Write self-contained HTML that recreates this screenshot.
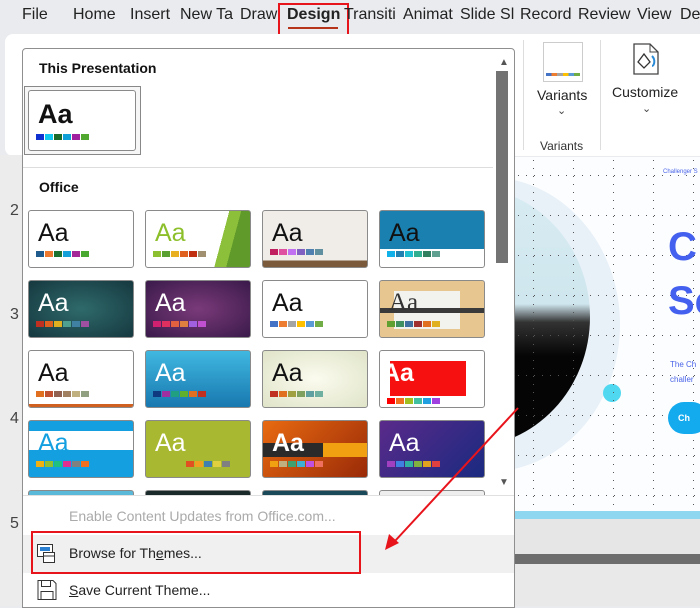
<!DOCTYPE html>
<html><head><style>
*{margin:0;padding:0;box-sizing:border-box}
body{width:700px;height:606px;overflow:hidden;background:#e9ebee;font-family:"Liberation Sans",sans-serif;position:relative}
.a{position:absolute}
.tab{position:absolute;top:6px;font-size:16px;color:#222}
.th{position:absolute;width:106px;height:58px;border:1px solid #8a8a8a;border-radius:3px;overflow:hidden;background:#fff}
.th .t{position:absolute;left:9px;top:8px;font-size:25px;color:#111}
.sq{position:absolute;bottom:10px;left:7px;display:flex;gap:1px}
.sq i{display:block;width:8px;height:6px}
</style></head><body>
<div class="tab" style="left:22px">File</div>
<div class="tab" style="left:73px">Home</div>
<div class="tab" style="left:130px">Insert</div>
<div class="tab" style="left:180px">New Ta</div>
<div class="tab" style="left:240px">Draw</div>
<div class="tab" style="left:287px;font-weight:bold">Design</div>
<div class="a" style="left:288px;top:27px;width:50px;height:2px;background:#b5341a"></div>
<div class="a" style="left:278px;top:3px;width:71px;height:39px;border:2px solid #e8141c"></div>
<div class="tab" style="left:344px">Transiti</div>
<div class="tab" style="left:403px">Animat</div>
<div class="tab" style="left:460px">Slide Sl</div>
<div class="tab" style="left:520px">Record</div>
<div class="tab" style="left:578px">Review</div>
<div class="tab" style="left:637px">View</div>
<div class="tab" style="left:680px">De</div>
<div class="a" style="left:5px;top:34px;width:695px;height:122px;background:#fff;border-radius:8px 0 0 8px"></div>
<div class="a" style="left:523px;top:40px;width:1px;height:110px;background:#ddd"></div>
<div class="a" style="left:600px;top:40px;width:1px;height:110px;background:#ddd"></div>
<div class="a" style="left:543px;top:42px;width:40px;height:40px;border:1px solid #ccc;background:#fff"></div>
<div class="a" style="left:546px;top:73px;width:34px;height:3px;background:linear-gradient(90deg,#4472c4 16%,#ed7d31 16% 33%,#a5a5a5 33% 50%,#ffc000 50% 66%,#5b9bd5 66% 83%,#70ad47 83%)"></div>
<div class="a" style="left:537px;top:87px;font-size:14px;color:#222">Variants</div>
<div class="a" style="left:557px;top:104px;font-size:11px;color:#444">⌄</div>
<div class="a" style="left:540px;top:139px;font-size:12px;color:#333">Variants</div>
<svg class="a" style="left:628px;top:42px" width="34" height="34"><path d="M6 2h16l8 8v22H6z" fill="#fff" stroke="#444" stroke-width="1.3"/><path d="M22 2v8h8" fill="none" stroke="#444"/><path d="M10 20l6-8 6 8-6 6z" fill="#fff" stroke="#333" stroke-width="1.3"/><path d="M24 14c4 4 2 10 0 10" stroke="#2a8ad6" stroke-width="2" fill="none"/></svg>
<div class="a" style="left:612px;top:84px;font-size:14px;color:#222">Customize</div>
<div class="a" style="left:642px;top:102px;font-size:11px;color:#444">⌄</div>
<div class="a" style="left:0;top:155px;width:22px;height:451px;background:#ececec"></div>
<div class="a" style="left:10px;top:202px;font-size:16px;color:#444">2</div>
<div class="a" style="left:10px;top:306px;font-size:16px;color:#444">3</div>
<div class="a" style="left:10px;top:410px;font-size:16px;color:#444">4</div>
<div class="a" style="left:10px;top:515px;font-size:16px;color:#444">5</div>
<div class="a" style="left:515px;top:157px;width:185px;height:362px;background:#fbfdff;overflow:hidden">
 <div class="a" style="left:-160px;top:20px;width:265px;height:295px;border-radius:50%;background:#e8f0f8"></div>
 <div class="a" style="left:-170px;top:30px;width:245px;height:260px;border-radius:50%;background:linear-gradient(180deg,#d8ecf2 0,#cfe6ee 45%,#333 52%,#050505 65%)"></div>
 <div class="a" style="left:88px;top:227px;width:18px;height:18px;border-radius:50%;background:#50d8f0"></div>
 <svg class="a" style="left:0;top:0" width="185" height="355"><defs><pattern id="h" width="8" height="40" patternUnits="userSpaceOnUse" y="18"><rect x="3" y="0" width="1" height="1" fill="#555"/></pattern><pattern id="v" width="40" height="8" patternUnits="userSpaceOnUse" x="18"><rect x="0" y="3" width="1" height="1" fill="#555"/></pattern></defs><rect width="185" height="355" fill="url(#h)"/><rect width="185" height="355" fill="url(#v)"/></svg>
 <div class="a" style="left:148px;top:12px;font-size:6px;color:#4a63e8">Challenger S</div>
 <div class="a" style="left:153px;top:68px;font-size:40px;font-weight:bold;color:#4460ee">C</div>
 <div class="a" style="left:153px;top:122px;font-size:40px;font-weight:bold;color:#4460ee">Sc</div>
 <div class="a" style="left:155px;top:200px;font-size:8px;color:#4a63e8;line-height:15px">The Ch<br>challer</div>
 <div class="a" style="left:153px;top:245px;width:40px;height:32px;border-radius:16px;background:#14aaee;color:#fff;font-size:9px;font-weight:bold;padding:11px 0 0 10px">Ch</div>
 <div class="a" style="left:0;top:354px;width:185px;height:8px;background:#8fd6f0"></div>
</div>
<div class="a" style="left:515px;top:519px;width:185px;height:35px;background:#e6e6e6"></div>
<div class="a" style="left:515px;top:554px;width:185px;height:10px;background:#6d6d6d"></div>
<div class="a" style="left:515px;top:564px;width:185px;height:42px;background:#e9e9e9"></div>
<div class="a" style="left:22px;top:48px;width:493px;height:560px;background:#fff;border:1px solid #8f8f8f;border-radius:4px 4px 0 0;overflow:hidden">
 <div class="a" style="left:16px;top:11px;font-size:14px;font-weight:bold;color:#111">This Presentation</div>
 <div class="a" style="left:1px;top:37px;width:117px;height:69px;border:1px solid #888;background:#f6f6f6"></div>
 <div class="th" style="left:5px;top:41px;height:61px;width:108px"><div class="t" style="font-weight:bold;font-size:27px">Aa</div><div class="sq"><i style="background:#1030d0"></i><i style="background:#10c8f0"></i><i style="background:#1a6a2a"></i><i style="background:#10a0d8"></i><i style="background:#a020a0"></i><i style="background:#50a830"></i></div></div>
 <div class="a" style="left:0;top:118px;width:470px;height:1px;background:#ddd"></div>
 <div class="a" style="left:16px;top:130px;font-size:14px;font-weight:bold;color:#111">Office</div>
 <div class="a" style="left:476px;top:8px;font-size:10px;color:#555">▲</div>
 <div class="a" style="left:473px;top:22px;width:12px;height:192px;background:#737373"></div>
 <div class="a" style="left:476px;top:428px;font-size:10px;color:#555">▼</div>
 <div class="a" style="left:0;top:155px;width:470px;height:291px;overflow:hidden">
  <div class="th" style="left:5px;top:6px"><div class="t">Aa</div><div class="sq"><i style="background:#1f5b8c"></i><i style="background:#ee7a30"></i><i style="background:#1e7230"></i><i style="background:#14a0d8"></i><i style="background:#a52898"></i><i style="background:#48a830"></i></div></div>
  <div class="th" style="left:122px;top:6px;background:linear-gradient(105deg,#fff 70%,#8cbf3a 70% 80%,#5f9a2a 80%)"><div class="t" style="color:#8cbf2a">Aa</div><div class="sq"><i style="background:#8cc030"></i><i style="background:#5aa030"></i><i style="background:#e8b020"></i><i style="background:#e06020"></i><i style="background:#c03010"></i><i style="background:#a09070"></i></div></div>
  <div class="th" style="left:239px;top:6px;background:linear-gradient(#f0ece8 88%,#7a5a3a 88%)"><div class="t">Aa</div><div class="sq" style="bottom:12px"><i style="background:#c02060"></i><i style="background:#e050a0"></i><i style="background:#c070f0"></i><i style="background:#8060c0"></i><i style="background:#5080b0"></i><i style="background:#6090a0"></i></div></div>
  <div class="th" style="left:356px;top:6px;background:linear-gradient(#1a80b0 68%,#fff 68%)"><div class="t">Aa</div><div class="sq"><i style="background:#10b0e8"></i><i style="background:#2080b0"></i><i style="background:#20c0d0"></i><i style="background:#30b090"></i><i style="background:#308060"></i><i style="background:#60a090"></i></div></div>
  <div class="th" style="left:5px;top:76px;background:radial-gradient(#2f6a6a,#15383f)"><div class="t" style="color:#fff">Aa</div><div class="sq"><i style="background:#c03020"></i><i style="background:#e06020"></i><i style="background:#e0b020"></i><i style="background:#50a090"></i><i style="background:#4080a0"></i><i style="background:#a050a0"></i></div></div>
  <div class="th" style="left:122px;top:76px;background:radial-gradient(#7a3a7a,#3a1a4a)"><div class="t" style="color:#fff">Aa</div><div class="sq"><i style="background:#d02070"></i><i style="background:#e03060"></i><i style="background:#e06040"></i><i style="background:#e08040"></i><i style="background:#a060e0"></i><i style="background:#c050d0"></i></div></div>
  <div class="th" style="left:239px;top:76px"><div class="t">Aa</div><div class="sq"><i style="background:#4472c4"></i><i style="background:#ed7d31"></i><i style="background:#a5a5a5"></i><i style="background:#ffc000"></i><i style="background:#5b9bd5"></i><i style="background:#70ad47"></i></div></div>
  <div class="th" style="left:356px;top:76px;background:#e8c690"><div class="a" style="left:14px;top:10px;width:66px;height:38px;background:#f2f2ee"></div><div class="a" style="left:0;top:27px;width:106px;height:5px;background:#3a3a3a"></div><div class="t" style="font-family:'Liberation Serif',serif;color:#333">Aa</div><div class="sq"><i style="background:#60a030"></i><i style="background:#409060"></i><i style="background:#4070a0"></i><i style="background:#a03030"></i><i style="background:#e07020"></i><i style="background:#e0b020"></i></div></div>
  <div class="th" style="left:5px;top:146px"><div class="t">Aa</div><div class="a" style="left:0;bottom:0;width:106px;height:3px;background:#d06020"></div><div class="sq"><i style="background:#e07020"></i><i style="background:#c05030"></i><i style="background:#906050"></i><i style="background:#a08060"></i><i style="background:#c0b080"></i><i style="background:#90a080"></i></div></div>
  <div class="th" style="left:122px;top:146px;background:linear-gradient(#40b8e0,#1878b0)"><div class="t" style="color:#fff">Aa</div><div class="sq"><i style="background:#103a80"></i><i style="background:#a030a0"></i><i style="background:#20a080"></i><i style="background:#60b030"></i><i style="background:#e07020"></i><i style="background:#c03020"></i></div></div>
  <div class="th" style="left:239px;top:146px;background:radial-gradient(#fbfbef,#e0e4c8)"><div class="t">Aa</div><div class="sq"><i style="background:#c03020"></i><i style="background:#e07020"></i><i style="background:#a0a040"></i><i style="background:#80a060"></i><i style="background:#60a0a0"></i><i style="background:#70b0a0"></i></div></div>
  <div class="th" style="left:356px;top:146px"><div class="a" style="left:10px;top:10px;width:76px;height:35px;background:#f71010"></div><div class="t" style="color:#fff;font-weight:bold;left:2px">Aa</div><div class="sq" style="bottom:3px"><i style="background:#f00"></i><i style="background:#f07020"></i><i style="background:#a0c020"></i><i style="background:#40c0a0"></i><i style="background:#20a0e0"></i><i style="background:#a040e0"></i></div></div>
  <div class="th" style="left:5px;top:216px;background:linear-gradient(#14a0e0 18%,#fff 18% 52%,#14a0e0 52%)"><div class="t" style="color:#14a0e0">Aa</div><div class="sq"><i style="background:#f0b010"></i><i style="background:#90c030"></i><i style="background:#20c080"></i><i style="background:#e03090"></i><i style="background:#808080"></i><i style="background:#f07020"></i></div></div>
  <div class="th" style="left:122px;top:216px;background:#a8b830"><div class="t" style="color:#fff">Aa</div><div class="sq" style="left:40px"><i style="background:#e05020"></i><i style="background:#f0a020"></i><i style="background:#4080b0"></i><i style="background:#e0d040"></i><i style="background:#808080"></i></div></div>
  <div class="th" style="left:239px;top:216px;background:linear-gradient(135deg,#e86a10,#9a2a08)"><div class="a" style="left:0;top:22px;width:60px;height:14px;background:#2a2a2a"></div><div class="a" style="left:60px;top:22px;width:46px;height:14px;background:#f0a010"></div><div class="t" style="color:#fff;font-weight:bold">Aa</div><div class="sq"><i style="background:#f0a010"></i><i style="background:#c0b080"></i><i style="background:#40a070"></i><i style="background:#40b0d0"></i><i style="background:#c050e0"></i><i style="background:#f07060"></i></div></div>
  <div class="th" style="left:356px;top:216px;background:linear-gradient(135deg,#5a2a8a,#1a2a80)"><div class="t" style="color:#fff">Aa</div><div class="sq"><i style="background:#a040c0"></i><i style="background:#4080e0"></i><i style="background:#30b0a0"></i><i style="background:#80b040"></i><i style="background:#e0a020"></i><i style="background:#e04040"></i></div></div>
  <div class="th" style="left:5px;top:286px;background:#5ab8d8"></div>
  <div class="th" style="left:122px;top:286px;background:#1a2a2a"></div>
  <div class="th" style="left:239px;top:286px;background:#1a4a5a"></div>
  <div class="th" style="left:356px;top:286px;background:#eee"></div>
 </div>
 <div class="a" style="left:0;top:446px;width:493px;height:1px;background:#e0e0e0"></div>
 <div class="a" style="left:46px;top:459px;font-size:14px;color:#aaa">Enable Content Updates from Office.com...</div>
 <div class="a" style="left:0;top:486px;width:493px;height:38px;background:#f0f0f0"></div>
 <svg class="a" style="left:13px;top:494px" width="22" height="22"><rect x="1.5" y="1.5" width="15" height="12" fill="#fff" stroke="#333"/><rect x="4" y="4" width="10" height="4" fill="#2a7fd0"/><rect x="7.5" y="9.5" width="11" height="10" fill="#fff" stroke="#333"/><path d="M7.5 13h11" stroke="#333"/></svg>
 <div class="a" style="left:46px;top:496px;font-size:14px;color:#222">Browse for Th<span style="text-decoration:underline">e</span>mes...</div>
 <svg class="a" style="left:13px;top:530px" width="22" height="22"><path d="M2 1.5h15l3 3v16H2z" fill="#fff" stroke="#333"/><rect x="5.5" y="1.5" width="9" height="6" fill="none" stroke="#333"/><rect x="5" y="12.5" width="12" height="8" fill="none" stroke="#333"/></svg>
 <div class="a" style="left:46px;top:533px;font-size:14px;color:#222"><span style="text-decoration:underline">S</span>ave Current Theme...</div>
</div>
<div class="a" style="left:31px;top:531px;width:330px;height:43px;border:2px solid #e8141c"></div>
<svg class="a" style="left:0;top:0" width="700" height="606"><line x1="518" y1="408" x2="395" y2="541" stroke="#e8141c" stroke-width="2"/><path d="M385 550l4-16 10 9z" fill="#e8141c"/></svg>
</body></html>
